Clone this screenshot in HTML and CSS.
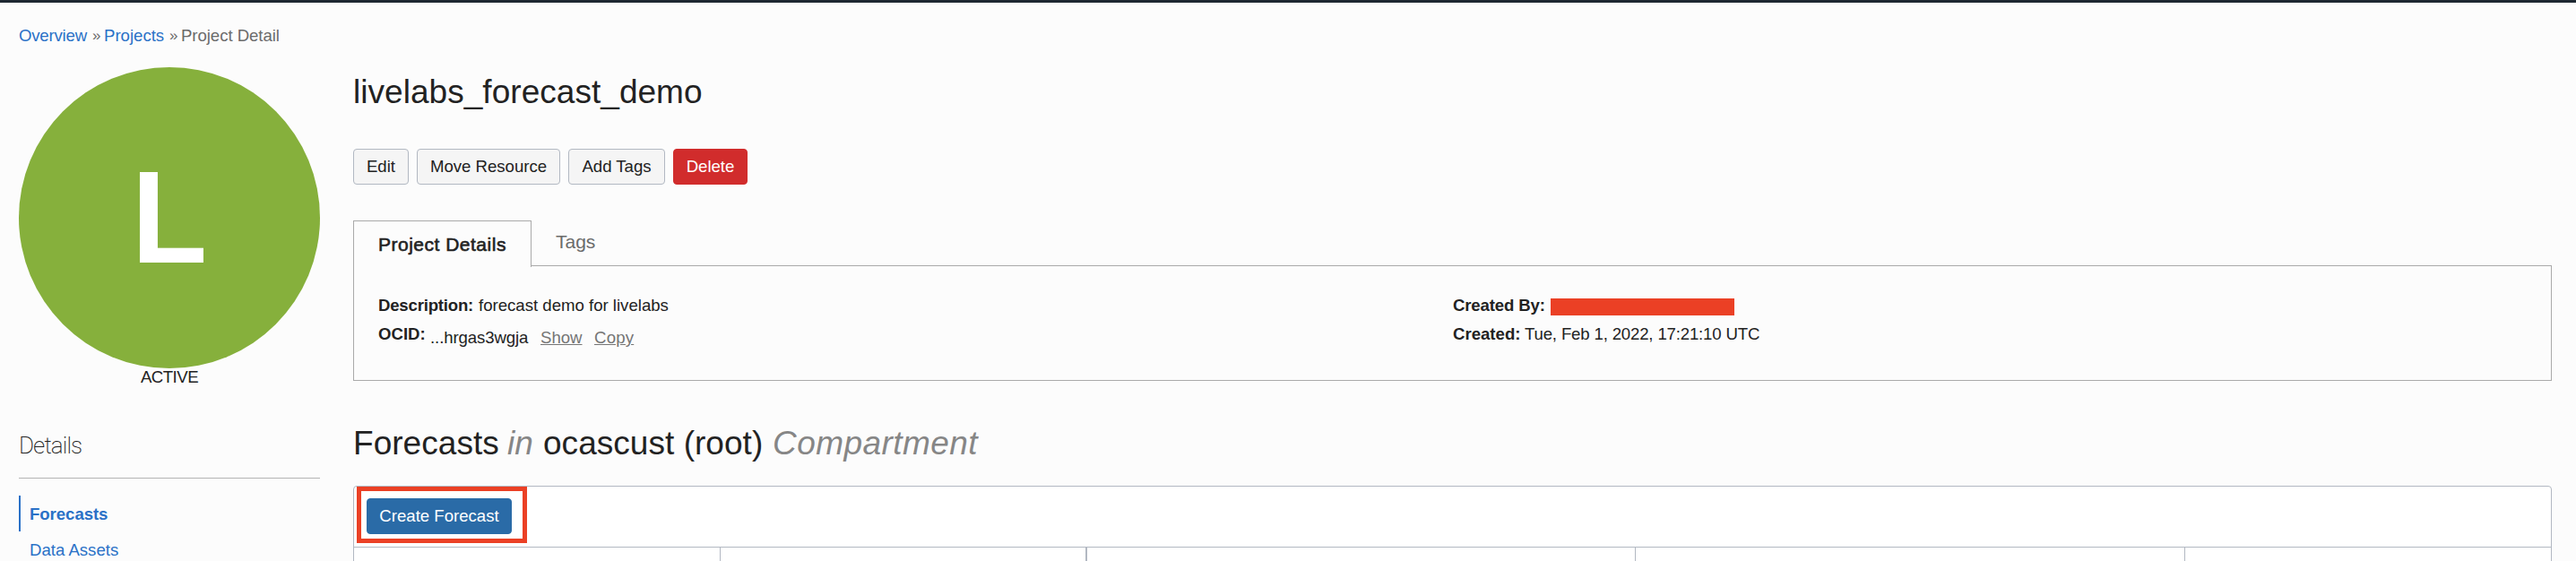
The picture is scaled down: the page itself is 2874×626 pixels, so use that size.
FILE: index.html
```
<!DOCTYPE html>
<html lang="en">
<head>
<meta charset="utf-8">
<title>Project Detail</title>
<link rel="stylesheet" href="styles.css">
</head>
<body>
<div class="topbar"></div>
<nav class="crumbs"><a href="#" class="c-over">Overview</a><span class="sep">»</span><a href="#" class="c-proj">Projects</a><span class="sep">»</span><span class="c-det">Project Detail</span></nav>
<div class="page">
  <aside class="side">
    <div class="badge"><span>L</span></div>
    <div class="status"><span>ACTIVE</span></div>
    <h2 class="side-title"><span>Details</span></h2>
    <ul class="menu">
      <li class="on"><a href="#">Forecasts</a></li>
      <li><a href="#">Data Assets</a></li>
    </ul>
  </aside>
  <main class="main">
    <h1 class="title"><span>livelabs_forecast_demo</span></h1>
    <div class="actions">
      <button class="btn b-edit"><span>Edit</span></button>
      <button class="btn b-move"><span>Move Resource</span></button>
      <button class="btn b-tags"><span>Add Tags</span></button>
      <button class="btn b-del"><span>Delete</span></button>
    </div>
    <div class="tabs">
      <div class="tab active"><span>Project Details</span></div>
      <div class="tab"><span>Tags</span></div>
    </div>
    <section class="panel">
      <div class="col">
        <div class="line"><b class="k-desc">Description:</b><span class="v-desc">forecast demo for livelabs</span></div>
        <div class="line"><b class="k-ocid">OCID:</b><span class="ocid"><span class="v-ocid">...hrgas3wgja</span><a href="#" class="a-show">Show</a><a href="#" class="a-copy">Copy</a></span></div>
      </div>
      <div class="col">
        <div class="line"><b class="k-by">Created By:</b><span class="redacted"></span></div>
        <div class="line"><b class="k-cr">Created:</b><span class="v-cr">Tue, Feb 1, 2022, 17:21:10 UTC</span></div>
      </div>
    </section>
    <h2 class="title sub"><span class="s1">Forecasts</span><i class="s2">in</i><span class="s3">ocascust (root)</span><i class="s4">Compartment</i></h2>
    <section class="table">
      <div class="toolbar"><div class="highlight"><button class="btn b-create"><span>Create Forecast</span></button></div></div>
      <div class="thead"><div></div><div></div><div></div><div></div><div></div></div>
    </section>
  </main>
</div>
</body>
</html>
```
FILE: styles.css
```
* { box-sizing: border-box; }
html { height: 626px; overflow: hidden; }
body { margin: 0; height: 626px; overflow: hidden; background: #fcfcfc; color: #222; font: 18.6px/24px "Liberation Sans", Arial, sans-serif; white-space: nowrap; }
h1, h2, ul { margin: 0; padding: 0; font-weight: 400; }
a { color: #2a71c7; text-decoration: none; }
.topbar { height: 3px; background: #1e2832; }
.crumbs { display: flex; height: 72px; padding: 25px 0 0 21px; color: #6b6b6b; }
.crumbs a, .crumbs .c-det { flex: none; }
.c-over { width: 82px; letter-spacing: -.2px; }
.c-proj { width: 73px; }
.c-det { letter-spacing: -.05px; }
.sep { width: 13px; font-size: 17px; }
.page { display: flex; gap: 37px; padding: 0 27px 0 21px; height: 551px; }
.side { width: 336px; flex: none; }
.badge { height: 336px; border-radius: 50%; background: #86b03c; color: #fff; display: flex; justify-content: center; padding-top: 83px; font-size: 147px; font-weight: 700; line-height: 168px; }
.badge span { transform: scaleX(.94); }
.status { text-align: center; height: 21px; line-height: 19px; letter-spacing: -.5px; }
.side-title { height: 102px; padding-top: 49px; border-bottom: 1px solid #b4b4b4; font: 200 26px/32px Roboto, Inter, sans-serif; letter-spacing: -.9px; color: #222; }
.menu { list-style: none; padding-top: 19px; }
.menu li { height: 40px; line-height: 42px; padding-left: 12px; }
.menu .on { border-left: 2px solid #2a71c7; padding-left: 10px; font-weight: 700; letter-spacing: -.05px; }
.main { flex: 1; min-width: 0; }
.title { height: 91px; padding-top: 5px; font-size: 37px; line-height: 46px; letter-spacing: .04px; }
.actions { display: flex; gap: 9px; height: 80px; }
.btn { height: 40px; margin: 0; padding: 0; border: 1px solid #b2b8c2; border-radius: 4px; background: #f5f5f5; color: #222; font: inherit; line-height: 38px; text-align: center; }
.b-edit { width: 62px; }
.b-move { width: 160px; }
.b-tags { width: 108px; }
.b-del { width: 83px; background: #d12c2c; border-color: #d12c2c; color: #fff; }
.b-create { width: 162px; background: #2a6ba7; border-color: #2a6ba7; color: #fff; }
.tabs { display: flex; height: 51px; position: relative; z-index: 1; }
.tab { padding: 11px 0 0 27px; font-size: 21px; line-height: 26px; color: #6b6b6b; height: 50px; }
.tab.active { width: 199px; height: 52px; padding: 13px 0 0 27px; border: 1px solid #aaa; border-bottom: 0; background: #fcfcfc; color: #222; letter-spacing: .5px; -webkit-text-stroke: .6px #222; }
.panel { display: grid; grid-template-columns: 1199px 1fr; height: 129px; margin-top: -1px; padding: 31px 0 0 27px; border: 1px solid #aaa; }
.line { display: flex; height: 32px; line-height: 26px; }
.ocid { display: flex; padding-top: 4px; }
.ocid a { color: #757575; text-decoration: underline; }
.k-desc { width: 112px; letter-spacing: -.2px; }
.k-ocid { width: 58px; }
.v-ocid { width: 123px; letter-spacing: -.1px; }
.a-show { width: 47px; margin-right: 13px; }
.a-copy { letter-spacing: .2px; }
.k-by { width: 109px; letter-spacing: -.15px; }
.k-cr { width: 80px; }
.v-cr { letter-spacing: -.16px; }
.redacted { width: 205px; height: 19px; margin-top: 5px; background: #eb4025; }
.sub { display: flex; height: 117px; padding-top: 47px; }
.sub i { color: #868686; }
.s1 { width: 172px; }
.s2 { width: 40px; }
.s3 { width: 256px; }
.s4 { letter-spacing: .45px; }
.table { height: 90px; border: 1px solid #b2b8c2; border-radius: 4px 4px 0 0; background: #fff; }
.toolbar { height: 68px; border-bottom: 1px solid #b2b8c2; padding: 0 0 0 3px; }
.highlight { width: 190px; height: 63px; border: 5px solid #eb4025; padding: 8px 0 0 6px; }
.thead { display: grid; grid-template-columns: 408px 408px 613px 613px 1fr; height: 24px; }
.thead div + div { border-left: 1px solid #b2b8c2; }
.thead div:nth-child(3) { border-left-width: 2px; }
```
